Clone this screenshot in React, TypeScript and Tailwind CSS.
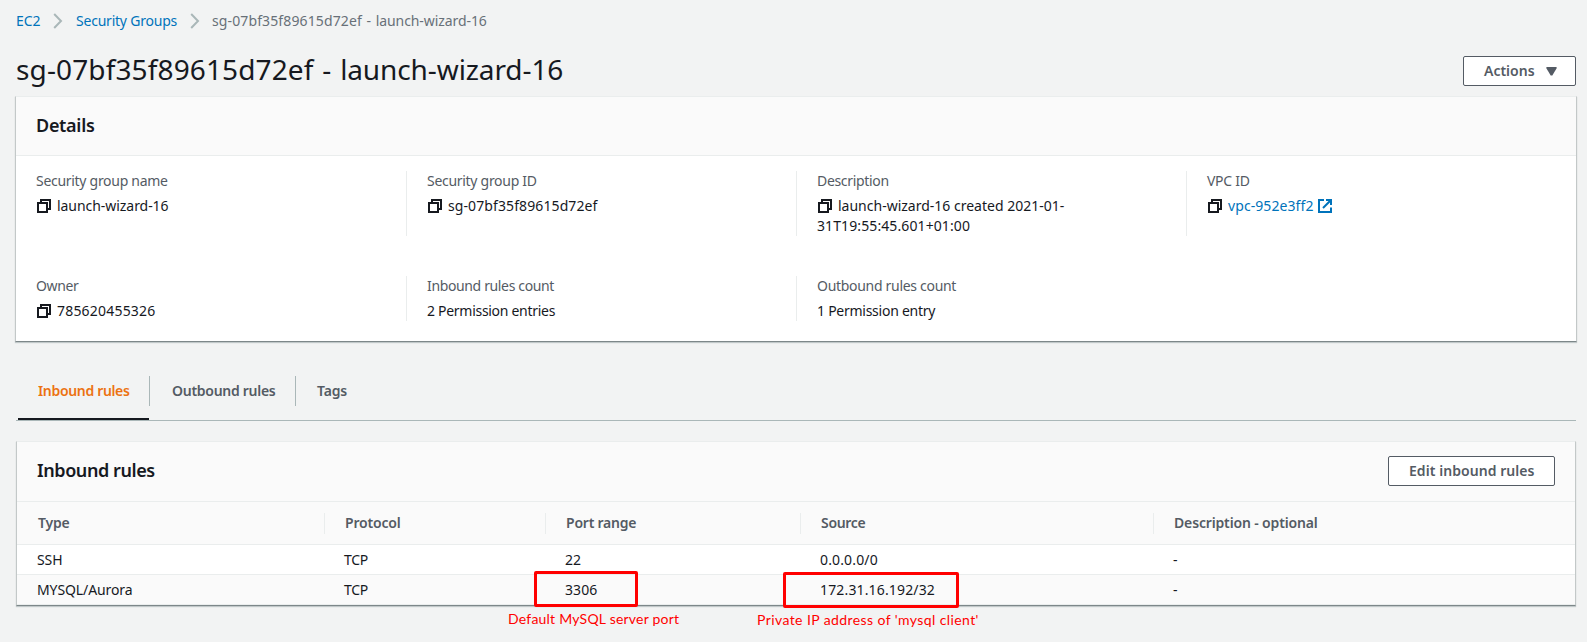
import type { ReactNode } from "react";

function CopyIcon() {
  return (
    <svg width="14" height="14" viewBox="0 0 14 14" className="ml-[1px] mr-[6px] inline-block align-[-2px]" fill="none" stroke="#16191f" strokeWidth="2">
      <path d="M1 4h9v9H1z" />
      <path d="M4 4V1h9v9h-3" />
    </svg>
  );
}

function ExternalIcon() {
  return (
    <svg width="14" height="14" viewBox="0 0 14 14" className="ml-[5px] inline-block align-[-2px]" fill="none" stroke="#0073bb" strokeWidth="2">
      <path d="M6 1H1v12h12V8.500" />
      <path d="M8 1h5v5M13 1L5 9" />
    </svg>
  );
}

function Chevron() {
  return (
    <svg width="10" height="16" viewBox="0 0 10 16" fill="none" stroke="#aab7b8" strokeWidth="2">
      <path d="M1.200 1l6.800 7L1.200 15" />
    </svg>
  );
}

function Field({ label, tracking, last, children }: { label: string; tracking: string; last?: boolean; children?: ReactNode }) {
  return (
    <div className={`pl-5 leading-5 ${last ? "" : "border-r border-[#eaeded]"}`}>
      <div className={`text-[#545b64] ${tracking}`}>{label}</div>
      <div className="mt-[5px]">{children}</div>
    </div>
  );
}

const columns = [
  { label: "Type", tracking: "tracking-[-0.2px]" },
  { label: "Protocol", tracking: "tracking-[-0.18px]" },
  { label: "Port range", tracking: "tracking-[-0.22px]" },
  { label: "Source", tracking: "tracking-[-0.3px]" },
  { label: "Description - optional", tracking: "tracking-[-0.15px]" },
];

const rules = [
  ["SSH", "TCP", "22", "0.0.0.0/0", "-"],
  ["MYSQL/Aurora", "TCP", "3306", "172.31.16.192/32", "-"],
];

const cellTracking = ["tracking-[-0.1px]", "tracking-[-0.25px]", "tracking-[0.1px]", "tracking-[0.15px]", ""];

const cardClass = "border border-x-[#c3c8c8] border-t-[#eaeded] border-b-[#7d8789] bg-white shadow-[0_1px_1px_0_rgba(0,28,36,0.2)]";
const buttonClass = "flex h-[30px] items-center rounded-[2px] border border-[#545b64] bg-white font-semibold text-[#545b64]";
const tableGrid = "grid grid-cols-[307px_221px_255px_353px_1fr]";

export default function App() {
  return (
    <div className="relative h-[642px] w-[1587px] overflow-hidden bg-[#f2f3f3] font-['Noto_Sans',sans-serif] text-[14px] leading-5 text-[#16191f]">
      <nav className="flex h-[42px] items-center pl-4">
        <a className="w-[37px] tracking-[-0.1px] text-[#0073bb]">EC2</a>
        <Chevron />
        <a className="ml-[13px] w-[114px] whitespace-nowrap tracking-[-0.22px] text-[#0073bb]">Security Groups</a>
        <Chevron />
        <span className="ml-3 whitespace-nowrap text-[#687078]">
          <span className="tracking-[0.12px]">sg-07bf35f89615d72ef</span>
          <span className="mx-px"> - </span>
          <span className="tracking-[-0.08px]">launch-wizard-16</span>
        </span>
      </nav>

      <header className="flex h-[54px] items-start justify-between pl-4 pr-[11px]">
        <h1 className="mt-[9px] text-[28px] leading-9">
          <span className="tracking-[0.13px]">sg-07bf35f89615d72ef</span>
          <span className="mx-[1.5px]"> - </span>
          <span className="tracking-[-0.1px]">launch-wizard-16</span>
        </h1>
        <button className={`${buttonClass} mt-[14px] w-[113px] pl-[20px]`}>
          Actions
          <svg width="11" height="9" viewBox="0 0 11 9" className="ml-[11px]" fill="#545b64">
            <path d="M.6 0h9.800l.4 1L6.300 8.600H4.700L.2 1z" />
          </svg>
        </button>
      </header>

      <section className={`ml-[15px] w-[1562px] ${cardClass}`}>
        <div className="flex h-[59px] items-center border-b border-[#eaeded] bg-[#fafafa] pb-[2px] pl-5">
          <h2 className="text-[18px] font-semibold leading-6 tracking-[-0.3px]">Details</h2>
        </div>
        <div className="grid grid-cols-[391px_390px_390px_1fr] gap-y-10 pb-5 pt-[15px]">
          <Field label="Security group name" tracking="tracking-[-0.29px]">
            <CopyIcon /><span className="tracking-[-0.05px]">launch-wizard-16</span>
          </Field>
          <Field label="Security group ID" tracking="tracking-[-0.29px]">
            <CopyIcon /><span className="tracking-[0.1px]">sg-07bf35f89615d72ef</span>
          </Field>
          <Field label="Description" tracking="tracking-[-0.33px]">
            <CopyIcon />launch-wizard-16 created 2021-01-<br />
            <span className="tracking-[0.1px]">31T19:55:45.601+01:00</span>
          </Field>
          <Field label="VPC ID" tracking="tracking-[-0.28px]" last>
            <CopyIcon /><a className="tracking-[0.08px] text-[#0073bb]">vpc-952e3ff2</a><ExternalIcon />
          </Field>
          <Field label="Owner" tracking="tracking-[-0.35px]">
            <CopyIcon /><span className="tracking-[0.2px]">785620455326</span>
          </Field>
          <Field label="Inbound rules count" tracking="tracking-[-0.36px]">
            <span className="tracking-[-0.29px]">2 Permission entries</span>
          </Field>
          <Field label="Outbound rules count" tracking="tracking-[-0.3px]" last>
            <span className="tracking-[-0.26px]">1 Permission entry</span>
          </Field>
        </div>
      </section>

      <div className="ml-4 mt-6 flex h-[55px] w-[1560px] border-b border-[#aab7b8] pl-[2px] font-semibold text-[#545b64]">
        <div className="h-[54px] w-[131px] border-b-2 border-[#16191f] pl-5 pt-[15px] tracking-[-0.33px] text-[#ec7211]">Inbound rules</div>
        <div className="mt-[10px] flex h-[30px] w-[146px] items-center border-l border-[#aab7b8] pl-[22px] tracking-[-0.28px]">Outbound rules</div>
        <div className="mt-[10px] flex h-[30px] items-center border-l border-[#aab7b8] pl-[21px] tracking-[-0.17px]">Tags</div>
      </div>

      <section className={`ml-4 mt-5 w-[1560px] ${cardClass}`}>
        <div className="flex h-[60px] items-center justify-between border-b border-[#eaeded] bg-[#fafafa] pl-5 pr-5">
          <h2 className="mb-[3px] text-[18px] font-semibold leading-6 tracking-[-0.42px]">Inbound rules</h2>
          <button className={`${buttonClass} mb-px w-[167px] pl-[20px] tracking-[0.06px]`}>Edit inbound rules</button>
        </div>
        <div className={`${tableGrid} h-[43px] items-center border-b border-[#eaeded] bg-[#fafafa] font-semibold text-[#545b64]`}>
          {columns.map((c, i) => (
            <div key={c.label} className={`flex h-[21px] items-center ${i ? "border-l border-[#eaeded] pl-[20px]" : "pl-[21px]"} ${c.tracking}`}>{c.label}</div>
          ))}
        </div>
        {rules.map((r, i) => (
          <div key={r[0]} className={`${tableGrid} h-[30px] items-center border-b border-[#eaeded] ${i % 2 ? "bg-[#fafafa]" : "bg-white"}`}>
            {r.map((v, j) => (
              <div key={j} className={`pl-5 ${cellTracking[j]}`}>{v}</div>
            ))}
          </div>
        ))}
      </section>

      <div className="absolute left-[534px] top-[571px] h-[36px] w-[104px] rounded-[2px] border-3 border-[#ff0000]" />
      <div className="absolute left-[783px] top-[572px] h-[36px] w-[176px] rounded-[2px] border-3 border-[#ff0000]" />
      <div className="absolute left-[508px] top-[609px] whitespace-nowrap font-['Lato',sans-serif] tracking-[0.22px] text-[#ff0000]">Default MySQL server port</div>
      <div className="absolute left-[757px] top-[610px] whitespace-nowrap font-['Lato',sans-serif] tracking-[0.41px] text-[#ff0000]">Private IP address of 'mysql client'</div>
    </div>
  );
}
